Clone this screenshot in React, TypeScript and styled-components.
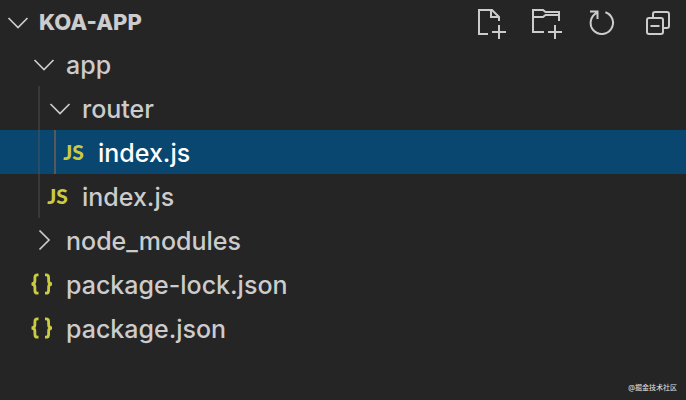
import React from "react";
import styled, { createGlobalStyle } from "styled-components";

const GlobalStyle = createGlobalStyle`
  * { box-sizing: border-box; }
  body {
    margin: 0;
    background: #252526;
    color: #cccccc;
    font-family: Inter, "Noto Sans CJK SC", sans-serif;
  }
  button { margin: 0; padding: 0; border: 0; background: none; color: inherit; font: inherit; }
`;

const Explorer = styled.main`
  display: flex;
  flex-direction: column;
  min-height: 100vh;
`;

const Header = styled.header`
  display: flex;
  align-items: center;
  justify-content: space-between;
  height: 42px;
  padding: 2px 13px 0 2px;
`;

const FolderTitle = styled.button`
  display: flex;
  align-items: center;
  gap: 5px;
  font-size: 22px;
  line-height: 40px;
  font-weight: 800;
`;

const Actions = styled.div`
  display: flex;
  gap: 23px;
`;

const ActionButton = styled.button`
  display: flex;
  width: 32px;
  height: 32px;
`;

const Icon = styled.svg`
  display: block;
  flex: none;
  width: 32px;
  height: 32px;
  fill: none;
  stroke: #cccccc;
  stroke-width: 2;
`;

const Tree = styled.nav`
  display: flex;
  flex-direction: column;
`;

const Row = styled.button<{ $selected?: boolean }>`
  display: flex;
  align-items: stretch;
  width: 100%;
  height: 44px;
  padding-left: 22px;
  text-align: left;
  font-size: 25px;
  line-height: 46px;
  font-weight: 500;
  white-space: nowrap;
  color: ${(p) => (p.$selected ? "#ffffff" : "#cccccc")};
  background: ${(p) => (p.$selected ? "#094771" : "transparent")};
`;

const Guide = styled.span<{ $strong?: boolean }>`
  flex: none;
  width: 16px;
  position: relative;
  &::after {
    content: "";
    position: absolute;
    top: 0;
    bottom: 0;
    right: -2px;
    width: 2px;
    background: ${(p) => (p.$strong ? "#585858" : "rgba(88, 88, 88, 0.4)")};
  }
`;

const IconSlot = styled.span<{ $file?: boolean }>`
  display: flex;
  flex: none;
  align-items: center;
  justify-content: center;
  width: 44px;
  padding-right: ${(p) => (p.$file ? "5px" : "0")};
`;

const JsMark = styled.span`
  color: #cbcb41;
  font-family: Lato, sans-serif;
  font-size: 21px;
  font-weight: 900;
`;

const Watermark = styled.footer`
  position: absolute;
  right: 9px;
  bottom: 7px;
  color: #e4e4e4;
  font-size: 7px;
  line-height: 10px;
`;

function Chevron({ open }: { open: boolean }) {
  return (
    <Icon viewBox="0 0 32 32" aria-hidden="true">
      <path
        strokeWidth="1.7"
        d={open ? "M6.5 12 16 21.5 25.5 12" : "M11.500 6.500 21 16 11.500 25.500"}
      />
    </Icon>
  );
}

function Braces() {
  return (
    <Icon viewBox="0 0 32 32" aria-hidden="true">
      <g stroke="#cbcb41" strokeWidth="2.8">
        <path d="M12.500 6.800h-1q-2.600 0-2.600 2.800v3.200q0 3.200-3.400 3.200q3.400 0 3.400 3.200v3.200q0 2.800 2.600 2.800h1" />
        <path d="M19 6.800h1q2.600 0 2.600 2.800v3.200q0 3.200 3.400 3.200q-3.400 0-3.400 3.200v3.200q0 2.800-2.600 2.800h-1" />
      </g>
    </Icon>
  );
}

type Kind = "open" | "closed" | "js" | "json";

const items: { name: string; kind: Kind; depth: number; selected?: boolean }[] = [
  { name: "app", kind: "open", depth: 0 },
  { name: "router", kind: "open", depth: 1 },
  { name: "index.js", kind: "js", depth: 2, selected: true },
  { name: "index.js", kind: "js", depth: 1 },
  { name: "node_modules", kind: "closed", depth: 0 },
  { name: "package-lock.json", kind: "json", depth: 0 },
  { name: "package.json", kind: "json", depth: 0 },
];

const actions = [
  {
    label: "New File",
    drawing: <path d="M12 28H3V4h13l7 7v4M15 4v7h8M23 19v14M16 26h14" />,
  },
  {
    label: "New Folder",
    drawing: <path d="M13 26H2V4h10l2.500 2H28V15M2 11h10l2.500-2H28M24 19v14M17 26h14" />,
  },
  {
    label: "Refresh Explorer",
    drawing: <path d="M19.400 6.200A11.200 11.200 0 1 1 10.800 6.800M4 5.400h7.500V13" />,
  },
  {
    label: "Collapse Folders",
    drawing: (
      <>
        <rect x="6" y="12" width="16" height="16" rx="2" />
        <path d="M12 12V8q0-2 2-2h12q2 0 2 2v12q0 2-2 2H22M9.500 20h9" />
      </>
    ),
  },
];

export default function App() {
  return (
    <>
      <GlobalStyle />
      <Explorer>
        <Header>
          <FolderTitle aria-expanded="true">
            <Chevron open />
            KOA-APP
          </FolderTitle>
          <Actions>
            {actions.map(({ label, drawing }) => (
              <ActionButton key={label} aria-label={label}>
                <Icon viewBox="0 0 32 32" overflow="visible" aria-hidden="true">{drawing}</Icon>
              </ActionButton>
            ))}
          </Actions>
        </Header>
        <Tree aria-label="Files">
          {items.map(({ name, kind, depth, selected }, index) => (
            <Row key={index} $selected={selected}>
              {Array.from({ length: depth }, (_, level) => (
                <Guide key={level} $strong={level === 1} />
              ))}
              <IconSlot $file={kind === "js" || kind === "json"}>
                {kind === "js" && <JsMark>JS</JsMark>}
                {kind === "json" && <Braces />}
                {(kind === "open" || kind === "closed") && <Chevron open={kind === "open"} />}
              </IconSlot>
              {name}
            </Row>
          ))}
        </Tree>
        <Watermark>@掘金技术社区</Watermark>
      </Explorer>
    </>
  );
}
